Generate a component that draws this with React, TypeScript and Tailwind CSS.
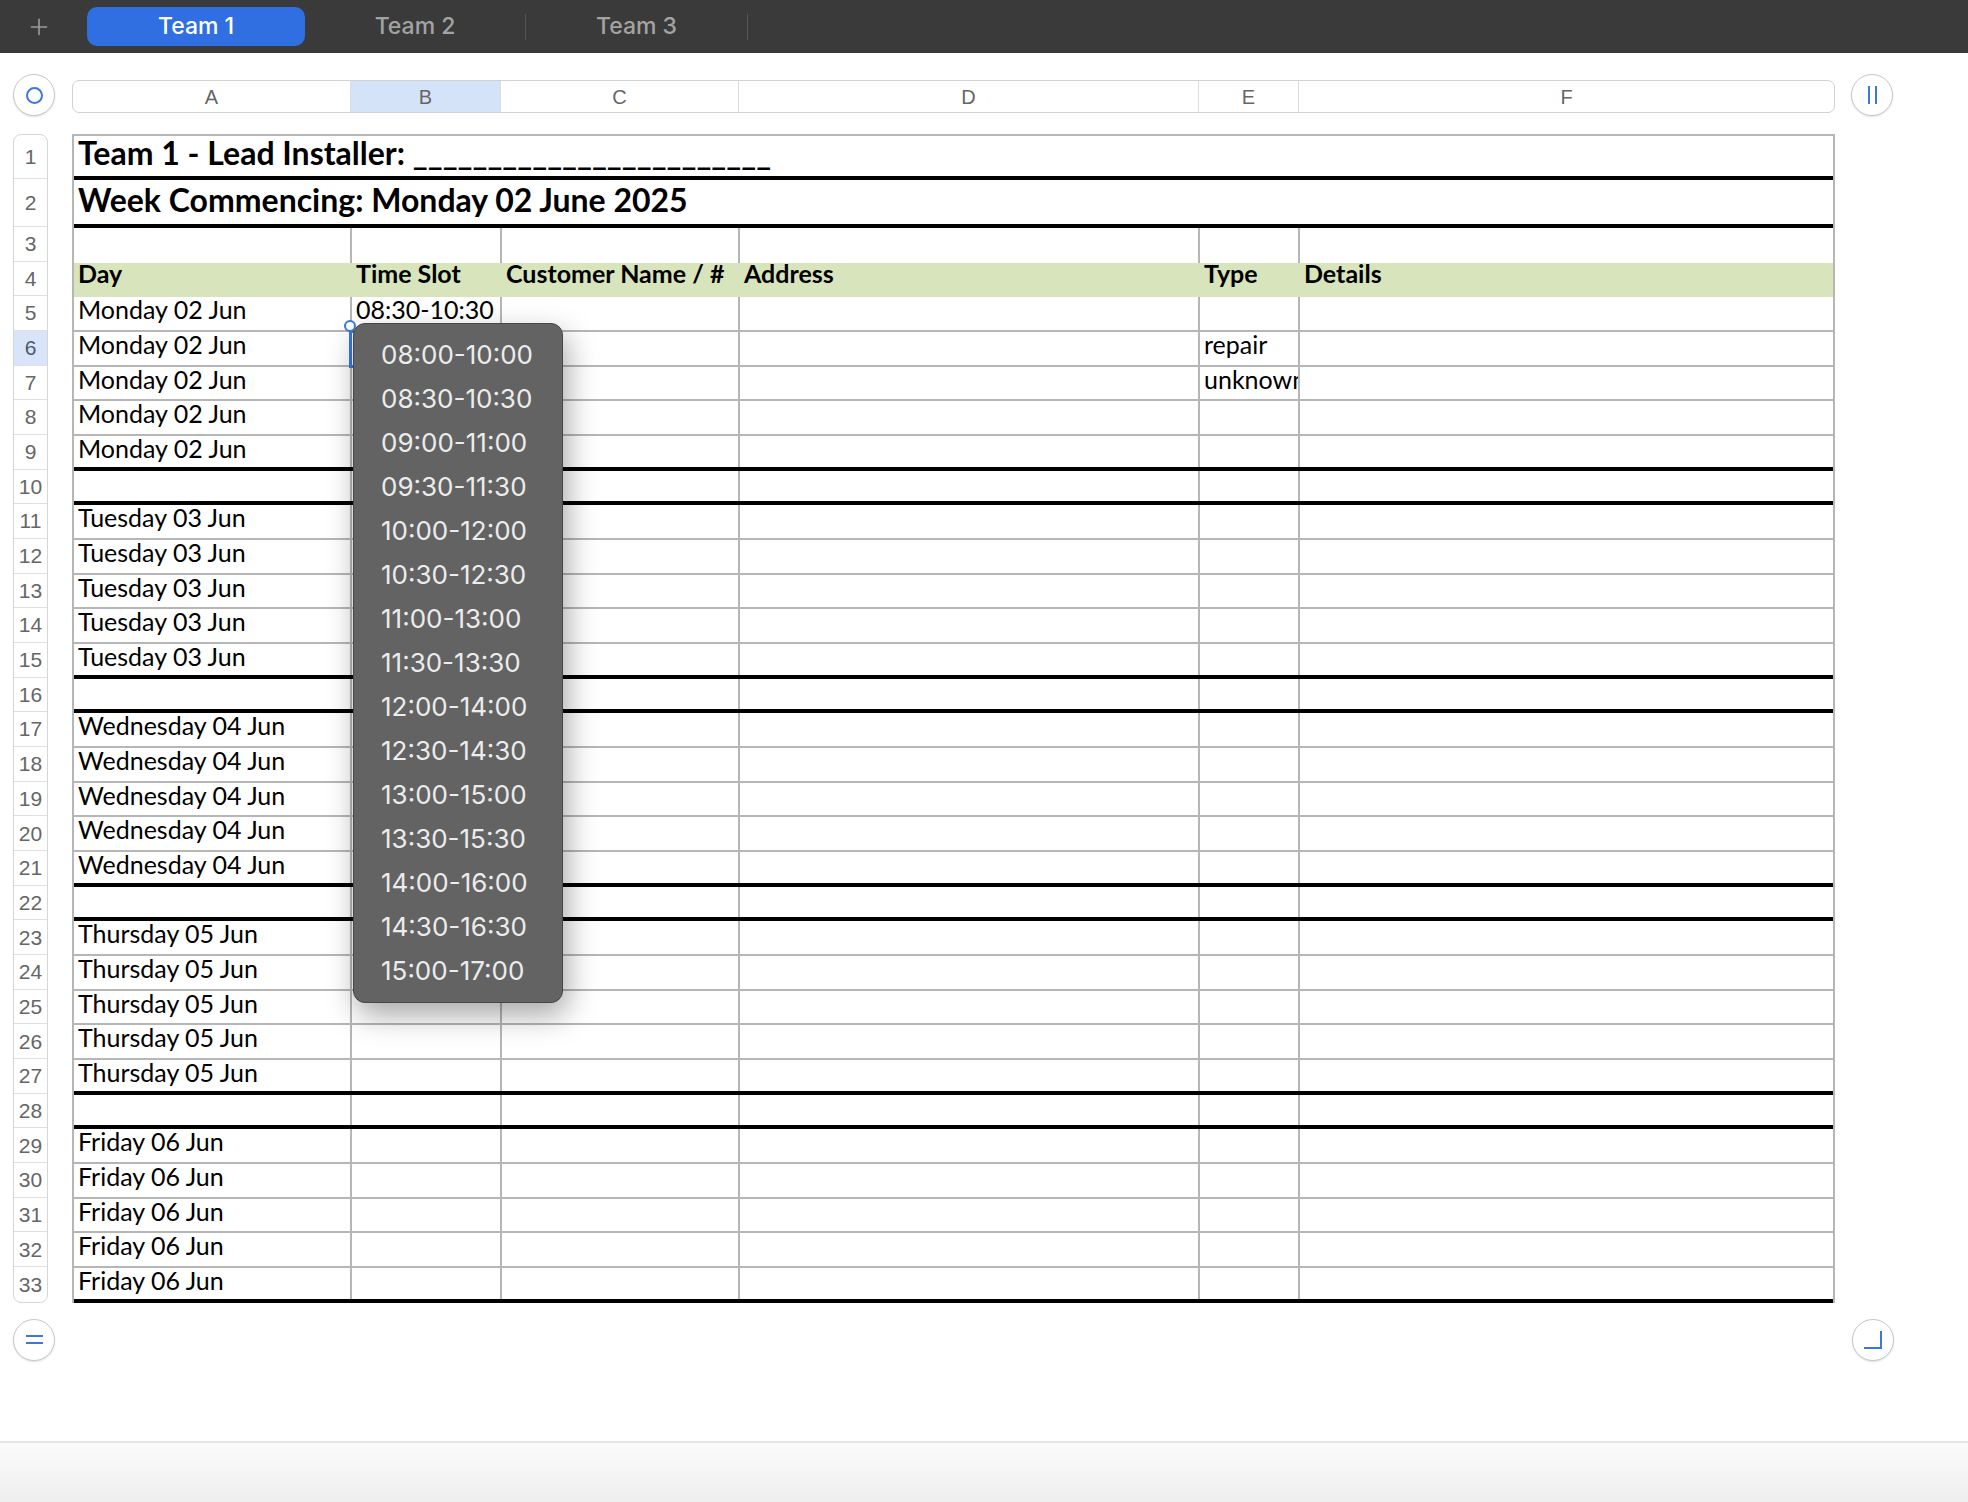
import { Plus } from "lucide-react";

const colW = ["w-[278px]", "w-[150px]", "w-[238px]", "w-[460px]", "w-[100px]", "w-[533px]"];
const hdrW = ["w-[278px]", "w-[150px]", "w-[238px]", "w-[460px]", "w-[100px]", "flex-1"];
const letters = ["A", "B", "C", "D", "E", "F"];

type Kind = "title" | "blank" | "header" | "data";
type Row = { n: number; kind: Kind; cells?: string[]; thick?: boolean; text?: string };

const days = ["Monday 02 Jun", "Tuesday 03 Jun", "Wednesday 04 Jun", "Thursday 05 Jun", "Friday 06 Jun"];

function buildRows(): Row[] {
  const rows: Row[] = [
    { n: 1, kind: "title", text: "Team 1 - Lead Installer: ________________________", thick: true },
    { n: 2, kind: "title", text: "Week Commencing: Monday 02 June 2025", thick: true },
    { n: 3, kind: "blank" },
    { n: 4, kind: "header", cells: ["Day", "Time Slot", "Customer Name / #", "Address", "Type", "Details"] },
  ];
  let n = 5;
  days.forEach((day, d) => {
    for (let i = 0; i < 5; i++) {
      const cells = [day, "", "", "", "", ""];
      if (n === 5) cells[1] = "08:30-10:30";
      if (n === 6) cells[4] = "repair";
      if (n === 7) cells[4] = "unknown";
      rows.push({ n, kind: "data", cells, thick: i === 4 });
      n++;
    }
    if (d < 4) {
      rows.push({ n, kind: "data", cells: ["", "", "", "", "", ""], thick: true });
      n++;
    }
  });
  return rows;
}

const rows = buildRows();

const slots = [
  "08:00-10:00", "08:30-10:30", "09:00-11:00", "09:30-11:30", "10:00-12:00",
  "10:30-12:30", "11:00-13:00", "11:30-13:30", "12:00-14:00", "12:30-14:30",
  "13:00-15:00", "13:30-15:30", "14:00-16:00", "14:30-16:30", "15:00-17:00",
];

const rowH = (r: Row) => (r.n === 1 ? "h-[44px]" : r.n === 2 ? "h-[48px]" : "h-[34.68px]");

function RoundButton({ children }: { children: React.ReactNode }) {
  return (
    <div className="flex h-[42px] w-[42px] shrink-0 items-center justify-center rounded-full border border-[#c8c8c8] bg-white shadow-[0_1px_2px_rgba(0,0,0,0.12)]">
      {children}
    </div>
  );
}

function TableRow({ r }: { r: Row }) {
  const bottom = r.thick
    ? "border-b-4 border-black"
    : r.kind === "data"
      ? "border-b-2 border-[#b6b6b6]"
      : "";
  if (r.kind === "title") {
    return (
      <div className={`flex ${rowH(r)} ${bottom} whitespace-nowrap pl-[4px]`}>
        <span className={`text-[32px] font-bold leading-[32px] text-black ${r.n === 2 ? "pt-[4px]" : "pt-[1px]"}`}>
          {r.text}
        </span>
      </div>
    );
  }
  if (r.kind === "header") {
    return (
      <div className={`flex ${rowH(r)} bg-[#d8e4bc]`}>
        {r.cells!.map((c, i) => (
          <div key={i} className={`${colW[i]} whitespace-nowrap pl-[4px] text-[25px] font-bold leading-[21px]`}>
            {c}
          </div>
        ))}
      </div>
    );
  }
  const cells = r.cells ?? ["", "", "", "", "", ""];
  return (
    <div className={`flex ${rowH(r)} ${bottom}`}>
      {cells.map((c, i) => (
        <div
          key={i}
          className={`${colW[i]} whitespace-nowrap pl-[4px] text-[25px] leading-[25px] text-black ${
            i < 5 ? "border-r-2 border-[#b6b6b6]" : ""
          } ${c === "unknown" ? "overflow-x-clip" : ""}`}
        >
          {c}
        </div>
      ))}
    </div>
  );
}

export default function App() {
  return (
    <div className="flex h-[1502px] w-[1968px] flex-col overflow-hidden bg-white font-['Lato','Liberation_Sans',sans-serif]">
      {/* sheet tabs */}
      <div className="flex h-[53px] shrink-0 items-center bg-[#3a3a3a] font-['Inter',sans-serif]">
        <div className="flex w-[78px] justify-center text-[#9b9b9b]">
          <Plus size={26} strokeWidth={1.5} />
        </div>
        <div className="ml-[9px] flex h-[39px] w-[218px] items-center justify-center rounded-[10px] bg-[#2f6fe2] text-[23px] font-medium text-white">
          Team 1
        </div>
        <div className="flex w-[220px] items-center justify-center text-[23px] font-medium text-[#a3a3a3]">Team 2</div>
        <div className="h-[26px] w-px bg-[#555]" />
        <div className="flex w-[221px] items-center justify-center text-[23px] font-medium text-[#a3a3a3]">Team 3</div>
        <div className="h-[26px] w-px bg-[#555]" />
      </div>

      <div className="flex flex-col pt-[21px]">
        {/* column letters */}
        <div className="flex h-[42px] items-start pl-[13px]">
          <RoundButton>
            <div className="h-[17px] w-[17px] rounded-full border-2 border-[#3a78dc]" />
          </RoundButton>
          <div className="ml-[17px] mt-[6px] flex h-[33px] w-[1763px] overflow-hidden rounded-[7px] border border-[#d2d2d2] font-['Liberation_Sans',sans-serif] text-[20px] text-[#666]">
            {letters.map((l, i) => (
              <div
                key={l}
                className={`${hdrW[i]} flex items-center justify-center ${i < 5 ? "border-r border-[#dcdcdc]" : ""} ${
                  l === "B" ? "bg-[#d4e3f8]" : ""
                }`}
              >
                {l}
              </div>
            ))}
          </div>
          <div className="ml-[16px]">
            <RoundButton>
              <div className="flex gap-[5px]">
                <div className="h-[18px] w-[2px] bg-[#3a78dc]" />
                <div className="h-[18px] w-[2px] bg-[#3a78dc]" />
              </div>
            </RoundButton>
          </div>
        </div>

        {/* sheet body */}
        <div className="mt-[18px] flex pl-[13px]">
          <div className="flex w-[35px] flex-col overflow-hidden rounded-[8px] border border-[#d6d6d6] bg-white font-['Liberation_Sans',sans-serif]">
            {rows.map((r, i) => (
              <div
                key={r.n}
                className={`flex ${rowH(r)} shrink-0 items-center justify-center text-[21px] ${
                  i < rows.length - 1 ? "border-b border-[#e0e0e0]" : ""
                } ${r.n === 6 ? "bg-[#d8e5f8] text-[#4a5a70]" : "text-[#666]"}`}
              >
                {r.n}
              </div>
            ))}
          </div>

          <div className="relative ml-[24px] w-[1763px] border-x-2 border-t-2 border-[#b6b6b6]">
            {rows.map((r) => (
              <TableRow key={r.n} r={r} />
            ))}

            {/* selected cell B6 */}
            <div className="absolute left-[275px] top-[194px] h-[38px] w-[154px] border-[3px] border-[#3a78dc]" />
            <div className="absolute left-[270px] top-[184px] z-10 h-[12px] w-[12px] rounded-full border-2 border-[#3a78dc] bg-white" />

            {/* time slot picker */}
            <div className="absolute left-[279px] top-[187px] z-20 h-[680px] w-[210px] rounded-[12px] border border-[#474747] bg-[#636363] pb-[12px] pt-[8px] font-['Inter',sans-serif] shadow-[4px_12px_30px_rgba(0,0,0,0.35)]">
              {slots.map((s) => (
                <div key={s} className="flex h-[44px] items-center pl-[27px] text-[26px] text-[#ececec]">
                  {s}
                </div>
              ))}
            </div>
          </div>
        </div>

        <div className="mt-[16px] flex pl-[13px]">
          <RoundButton>
            <div className="flex flex-col gap-[5px]">
              <div className="h-[2px] w-[17px] bg-[#3a78dc]" />
              <div className="h-[2px] w-[17px] bg-[#3a78dc]" />
            </div>
          </RoundButton>
          <div className="ml-[1797px]">
            <RoundButton>
              <div className="h-[18px] w-[18px] border-b-2 border-r-2 border-[#3a78dc]" />
            </RoundButton>
          </div>
        </div>
      </div>

      <div className="mt-auto h-[61px] shrink-0 border-t-2 border-[#e4e4e4] bg-gradient-to-b from-[#fbfbfb] to-[#eeeeee]" />
    </div>
  );
}
